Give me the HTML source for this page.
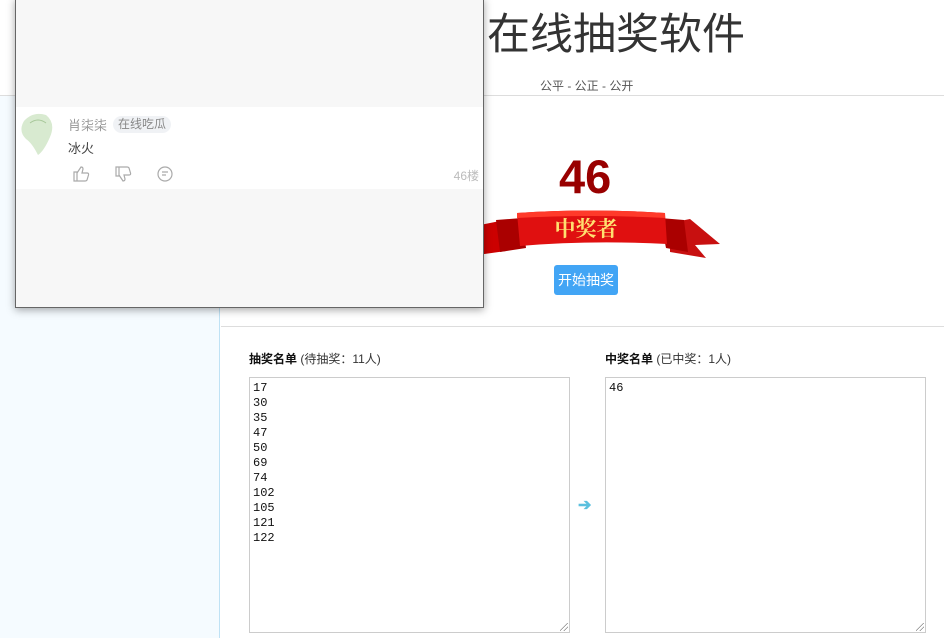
<!DOCTYPE html>
<html><head><meta charset="utf-8"><style>
*{margin:0;padding:0;box-sizing:border-box}
body{width:944px;height:638px;overflow:hidden;background:#fff;font-family:"Liberation Sans","Noto Sans CJK SC",sans-serif;position:relative}
.side{position:absolute;left:0;top:96px;width:220px;height:542px;background:#f5fbff;border-right:1px solid #bfe2f5}
.hline{position:absolute;left:0;top:95px;width:944px;height:1px;background:#ddd}
.title{position:absolute;left:487px;top:0px;font-size:43px;color:#333}
.sub{position:absolute;left:540px;top:77px;font-size:12px;color:#555}
.num{position:absolute;left:559px;top:149px;font-size:47px;font-weight:bold;color:#990000}
.btn{position:absolute;left:554px;top:265px;width:64px;height:30px;background:#42a5f5;color:#fff;border-radius:3px;font-size:14px;text-align:center;line-height:30px}
.hl2{position:absolute;left:221px;top:326px;width:723px;height:1px;background:#ddd}
.lbl{position:absolute;top:350px;font-size:12px;color:#333}
.lbl b{color:#111}
.ta{position:absolute;top:377px;height:256px;border:1px solid #ccc;background:#fff;font-family:"Liberation Mono","WenQuanYi Zen Hei",monospace;font-size:12px;line-height:15px;padding:3px 3px;color:#111;white-space:pre}
.grip{position:absolute;right:1px;bottom:1px;width:8px;height:8px;background:linear-gradient(135deg,transparent 45%,#888 45%,#888 52%,transparent 52%,transparent 70%,#888 70%,#888 77%,transparent 77%)}
.arrow{position:absolute;left:578px;top:495px;color:#5bc0de;font-size:16px;font-weight:bold}
.pop{position:absolute;left:15px;top:-2px;width:469px;height:310px;background:#f7f7f7;border:1px solid #666;box-shadow:0 2px 8px rgba(0,0,0,.35)}
.cm{position:absolute;left:0;top:108px;width:467px;height:82px;background:#fff}
.name{position:absolute;left:52px;top:8px;font-size:13px;color:#999}
.tag{position:absolute;left:97px;top:9px;font-size:12px;color:#888;background:#f0f2f5;border-radius:9px;padding:0 5px;line-height:17px}
.txt{position:absolute;left:52px;top:31px;font-size:13px;color:#444}
.floor{position:absolute;right:4px;top:60px;font-size:12px;color:#bbb}
</style></head><body>
<div class="hline"></div>
<div class="side"></div>
<div class="title">在线抽奖软件</div>
<div class="sub">公平 - 公正 - 公开</div>
<div class="num">46</div>
<svg style="position:absolute;left:470px;top:210px" width="256" height="52" viewBox="0 0 256 52">
<polygon points="0,17 30,11 36,41 0,46" fill="#c00"/>
<polygon points="200,13 220,9 250,34 225,35 236,48 200,42" fill="#c81010"/>
<path d="M26,10 L52,8 L56,38 L30,42 Z" fill="#a00"/>
<path d="M190,8 L214,10 L218,42 L196,38 Z" fill="#a00"/>
<path d="M47,3 Q120,-2 195,3 L197,34 Q120,30 50,36 Z" fill="#e01010"/>
<path d="M47,3 Q120,-2 195,3 L195,8 Q120,4 47,8 Z" fill="#ff3a2a"/>
<text x="116" y="26" text-anchor="middle" font-family="Noto Serif CJK SC,serif" font-weight="bold" font-size="21" fill="#ffe070">中奖者</text>
</svg>
<div class="btn">开始抽奖</div>
<div class="hl2"></div>
<div class="lbl" style="left:249px"><b>抽奖名单</b> (待抽奖：11人)</div>
<div class="lbl" style="left:605px"><b>中奖名单</b> (已中奖：1人)</div>
<div class="ta" style="left:249px;width:321px">17
30
35
47
50
69
74
102
105
121
122<div class="grip"></div></div>
<div class="arrow">➔</div>
<div class="ta" style="left:605px;width:321px">46<div class="grip"></div></div>
<div class="pop">
<div class="cm">
<svg style="position:absolute;left:2px;top:4px" width="38" height="44" viewBox="0 0 38 44"><path d="M6,10 Q15,0 28,4 Q38,12 32,26 Q26,40 20,44 Q14,32 8,28 Q0,20 6,10Z" fill="#d8ead0"/><path d="M12,12 Q20,6 28,12" stroke="#a8c89a" fill="none"/></svg>
<div class="name">肖柒柒</div>
<div class="tag">在线吃瓜</div>
<div class="txt">冰火</div>
<svg style="position:absolute;left:56px;top:58px" width="120" height="18" viewBox="0 0 120 18" fill="none" stroke="#aaa" stroke-width="1.2">
<path d="M2,7 h3 v9 h-3z M5,8 l4,-6 q2,0 2,2 l-1,4 h5 q2,0 1.5,2 l-1.5,5 q-.5,1 -2,1 h-8"/>
<path d="M44,11 h3 v-9 h-3z M47,10 l4,6 q2,0 2,-2 l-1,-4 h5 q2,0 1.5,-2 l-1.5,-5 q-.5,-1 -2,-1 h-8"/>
<circle cx="93" cy="9" r="7"/><path d="M90,7 h6 M90,10 h4"/>
</svg>
<div class="floor">46楼</div>
</div>
</div>
</body></html>
